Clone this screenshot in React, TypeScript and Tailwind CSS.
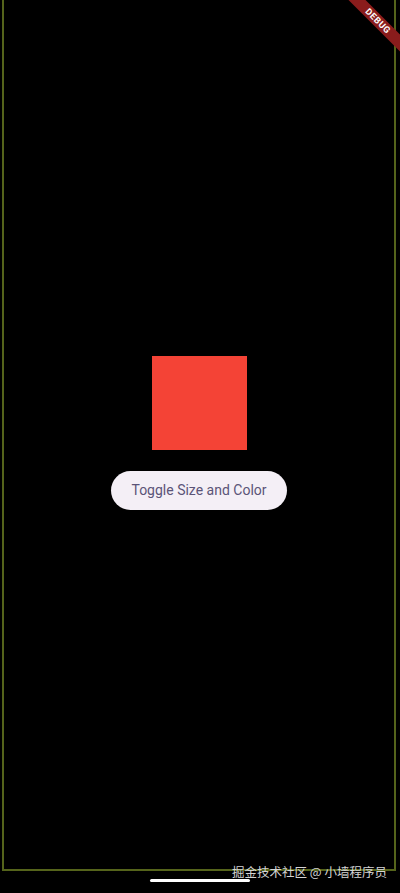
export default function App() {
  return (
    <div
      className="relative w-[400px] h-[893px] bg-black overflow-hidden"
      style={{ fontFamily: "Roboto, 'Noto Sans', sans-serif" }}
    >
      {/* device frame */}
      <div className="ml-[2px] mr-[4px] h-[871px] border-l-2 border-r-2 border-b-2 border-[#55641b] flex flex-col items-center pt-[356px]">
        <div className="w-[95px] h-[94px] bg-[#f44336]" />
        <button className="mt-[21px] h-[39px] w-[176px] rounded-full bg-[#f4eff6] text-[#5b5478] text-[14px] font-normal">
          Toggle Size and Color
        </button>
      </div>

      {/* home indicator */}
      <div className="mx-auto mt-[8px] w-[100px] h-[3px] rounded-full bg-white" />

      {/* watermark */}
      <div
        className="absolute left-[232px] top-[863px] text-[12.5px] leading-[18px] text-[#d4d4d4] whitespace-nowrap"
        style={{ fontFamily: "'Noto Sans CJK SC', 'Noto Sans', sans-serif" }}
      >
        掘金技术社区 @ 小墙程序员
      </div>

      {/* debug banner */}
      <div className="absolute left-[318px] top-[15px] w-[120px] h-[12px] rotate-45 bg-[#8a1c1c] flex items-center justify-center">
        <span className="text-white text-[9px] font-bold leading-none tracking-[0.5px]">
          DEBUG
        </span>
      </div>
    </div>
  );
}
